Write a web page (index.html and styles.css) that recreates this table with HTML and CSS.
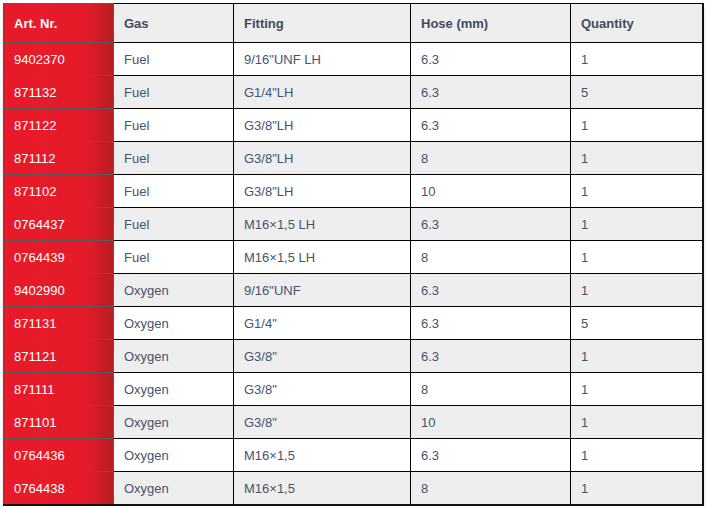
FILE: index.html
```html
<!DOCTYPE html>
<html>
<head>
<meta charset="utf-8">
<link rel="stylesheet" href="styles.css">
</head>
<body>
<div class="wrap">
<table class="parts">
<thead>
<tr><th class="art">Art. Nr.</th><th>Gas</th><th>Fitting</th><th>Hose (mm)</th><th>Quantity</th></tr>
</thead>
<tbody>
<tr><td class="art">9402370</td><td>Fuel</td><td>9/16"UNF LH</td><td>6.3</td><td>1</td></tr>
<tr><td class="art">871132</td><td>Fuel</td><td>G1/4"LH</td><td>6.3</td><td>5</td></tr>
<tr><td class="art">871122</td><td>Fuel</td><td>G3/8"LH</td><td>6.3</td><td>1</td></tr>
<tr><td class="art">871112</td><td>Fuel</td><td>G3/8"LH</td><td>8</td><td>1</td></tr>
<tr><td class="art">871102</td><td>Fuel</td><td>G3/8"LH</td><td>10</td><td>1</td></tr>
<tr><td class="art">0764437</td><td>Fuel</td><td>M16×1,5 LH</td><td>6.3</td><td>1</td></tr>
<tr><td class="art">0764439</td><td>Fuel</td><td>M16×1,5 LH</td><td>8</td><td>1</td></tr>
<tr><td class="art">9402990</td><td>Oxygen</td><td>9/16"UNF</td><td>6.3</td><td>1</td></tr>
<tr><td class="art">871131</td><td>Oxygen</td><td>G1/4"</td><td>6.3</td><td>5</td></tr>
<tr><td class="art">871121</td><td>Oxygen</td><td>G3/8"</td><td>6.3</td><td>1</td></tr>
<tr><td class="art">871111</td><td>Oxygen</td><td>G3/8"</td><td>8</td><td>1</td></tr>
<tr><td class="art">871101</td><td>Oxygen</td><td>G3/8"</td><td>10</td><td>1</td></tr>
<tr><td class="art">0764436</td><td>Oxygen</td><td>M16×1,5</td><td>6.3</td><td>1</td></tr>
<tr><td class="art">0764438</td><td>Oxygen</td><td>M16×1,5</td><td>8</td><td>1</td></tr>
</tbody>
</table>
</div>
</body>
</html>
```
FILE: styles.css
```css
html, body {
  margin: 0;
  padding: 0;
  background: #ffffff;
}
body {
  padding: 3px 0 0 3px;
  font-family: "Liberation Sans", Arial, sans-serif;
}
.wrap {
  width: 701px;
  box-shadow: 0 3px 3px -1px rgba(0, 0, 0, 0.4);
}
.parts {
  width: 701px;
  border-collapse: collapse;
  table-layout: fixed;
  border-top: 1px solid #555;
  border-left: 1px solid #555;
  border-right: 2px solid #111;
  border-bottom: 2px solid #111;
  font-size: 13px;
}
.parts th, .parts td {
  border: 1px solid #000;
  text-align: left;
  padding: 0 0 0 10px;
  color: #44546f;
  font-weight: normal;
}
.parts th {
  height: 38px;
  background: #eeeeee;
  font-weight: bold;
  color: #3f4b5e;
}
.parts td {
  height: 32px;
}
.parts tbody tr:nth-child(odd) td { background: #ffffff; }
.parts tbody tr:nth-child(even) td { background: #eeeeee; }
.parts th:nth-child(1) { width: 99px; }
.parts th:nth-child(2) { width: 109px; }
.parts th:nth-child(3) { width: 166px; }
.parts th:nth-child(4) { width: 149px; }
.parts .art, .parts tbody tr td.art {
  color: #ffffff;
  background: linear-gradient(to right, #e81a2a 0%, #e51b2a 75%, #b71d22 100%);
  border-color: #5a5a5a;
}
.parts th.art { font-weight: bold; }
```
